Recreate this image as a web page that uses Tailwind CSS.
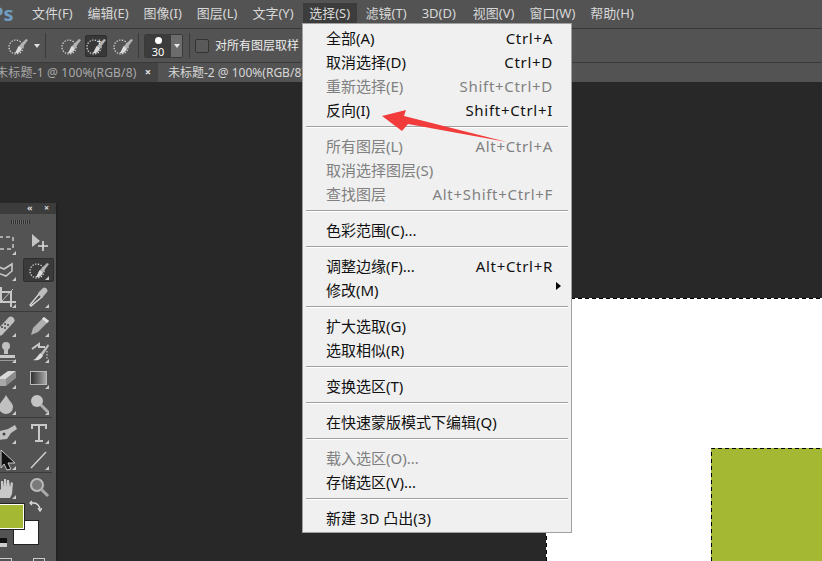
<!DOCTYPE html>
<html><head><meta charset="utf-8"><script src="https://cdn.jsdelivr.net/npm/@tailwindcss/browser@4"></script></head>
<body class="m-0">
<svg class="absolute w-0 h-0">
  <defs>
    <symbol id="qs" viewBox="0 0 20 20">
      <circle cx="8" cy="11" r="7" fill="none" stroke="#e0e0e0" stroke-width="1.2" stroke-dasharray="1.4 1.4"/>
      <path d="M11 10 L18 3 L20 4 L14 12 Z" fill="#b4b4b4"/>
      <path d="M6 17 C9 16 9 11 11 10 L14 12 C13 16 10 18 6 17Z" fill="#dcdcdc"/>
    </symbol>
  </defs>
</svg>
<div class="relative w-[822px] h-[561px] overflow-hidden bg-[#282828] flex flex-col font-['Noto_Sans','Noto_Sans_CJK_SC',sans-serif]">
  <!-- menu bar -->
  <div class="h-[29px] bg-[#535353] border-b border-[#363636] flex items-center text-[13px] text-[#d8d8d8] shrink-0 relative overflow-hidden">
    <span class="absolute -left-[9px] top-[2px] text-[20px] font-bold text-[#6f9fc6] leading-[24px]">Ps</span>
    <div class="ml-[32px] flex gap-[15px] whitespace-nowrap">
      <span>文件(F)</span><span>编辑(E)</span><span>图像(I)</span><span>图层(L)</span><span>文字(Y)</span>
      <span class="w-[54px] -mx-[6px] h-[20px] bg-[#3c3c3c] text-center leading-[20px] mt-[-1px]">选择(S)</span>
      <span>滤镜(T)</span><span class="mr-[2px]">3D(D)</span><span>视图(V)</span><span>窗口(W)</span><span>帮助(H)</span>
    </div>
  </div>
  <!-- options bar -->
  <div class="h-[34px] bg-[#535353] border-b border-[#3a3a3a] flex items-center shrink-0 text-[12px] text-[#ececec]">
    <svg class="ml-[8px] w-[20px] h-[20px]"><use href="#qs"/></svg>
    <span class="ml-[6px] w-0 h-0 border-x-[3px] border-x-transparent border-t-[4px] border-t-[#e0e0e0]"></span>
    <span class="ml-[5px] w-px h-[25px] bg-[#3a3a3a]"></span>
    <svg class="ml-[15px] w-[20px] h-[20px]"><use href="#qs"/></svg>
    <div class="ml-[4px] w-[22px] h-[22px] bg-[#383838] border border-[#2e2e2e] rounded-[2px] relative flex items-center justify-center">
      <svg class="w-[20px] h-[20px]"><use href="#qs"/></svg>
      <span class="absolute right-[4px] top-[1px] text-[9px] leading-[9px] text-white">+</span>
    </div>
    <svg class="ml-[6px] w-[20px] h-[20px]"><use href="#qs"/></svg>
    <span class="ml-[5px] w-px h-[25px] bg-[#3a3a3a]"></span>
    <div class="ml-[5px] w-[39px] h-[24px] flex border border-[#3a3a3a] rounded-[2px] overflow-hidden">
      <div class="flex-1 bg-[#3c3c3c] relative text-center text-[11px] leading-[11px] text-white pt-[11px]">
        <span class="absolute left-[10px] top-[2px] w-[7px] h-[7px] rounded-full bg-white"></span>30
      </div>
      <div class="w-[11px] bg-[#6c6c6c] flex items-center justify-center">
        <span class="w-0 h-0 border-x-[3px] border-x-transparent border-t-[4px] border-t-[#e8e8e8]"></span>
      </div>
    </div>
    <span class="ml-[6px] w-px h-[25px] bg-[#3a3a3a]"></span>
    <span class="ml-[5px] w-[14px] h-[14px] bg-[#5a5a5a] border border-[#333] rounded-[2px]"></span>
    <span class="ml-[6px] whitespace-nowrap">对所有图层取样</span>
  </div>
  <!-- tabs -->
  <div class="h-[19px] bg-[#3b3b3b] flex text-[12px] shrink-0 leading-[19px]">
    <div class="w-[158px] bg-[#444444] text-[#a8a8a8] relative overflow-hidden whitespace-nowrap">
      <span class="absolute -left-[4px] top-0 tracking-[0.2px]">未标题-1 @ 100%(RGB/8)</span>
      <span class="absolute right-[7px] top-[-1px] text-[11px] font-bold text-[#e0e0e0]">×</span>
    </div>
    <div class="flex-1 bg-[#535353] text-[#d8d8d8] pl-[10px] whitespace-nowrap">未标题-2 @ 100%(RGB/8)</div>
  </div>
  <div class="flex-1"></div>

  <!-- document -->
  <div class="absolute left-[546px] top-[298px] w-[276px] h-[263px] bg-white">
    <div class="absolute left-[165px] top-[150px] w-[111px] h-[113px] bg-[#a5b834]"></div>
    <svg class="absolute inset-0 w-[276px] h-[263px]" fill="none" stroke="#000" stroke-dasharray="4 3">
      <path d="M0.5 263V0.5H276"/>
      <path d="M165.5 263V150.5H276"/>
    </svg>
  </div>

  <!-- tools panel -->
  <div class="absolute left-0 top-[203px] w-[58px] h-[358px] bg-[#535353] border-r-2 border-[#222] text-[#ccc]">
    <div class="h-[11px] bg-[#3c3c3c] relative text-[9px] leading-[10px] text-[#ddd]">
      <span class="absolute left-[27px] top-0 font-bold">«</span>
      <span class="absolute left-[44px] top-0 font-bold">×</span>
    </div>
    <div class="h-[15.5px] flex justify-center items-start pt-[6px] pr-[16px]">
      <div class="w-[19px] h-[4px] bg-[repeating-linear-gradient(90deg,#2e2e2e_0,#2e2e2e_1px,#6a6a6a_1px,#6a6a6a_2px)]"></div>
    </div>
    <div class="-ml-[11px] grid grid-cols-[33px_33px] grid-rows-[27px_27px_27px_2px_26px_26px_26px_26px_3px_26px_26px_3px_26px]">
      <!-- marquee -->
      <div class="relative flex items-center justify-center"><svg width="24" height="24" fill="none" stroke="#c8c8c8" stroke-width="1.5" stroke-dasharray="4 3"><rect x="5" y="6" width="14" height="12"/></svg><span class="absolute right-[6px] bottom-[2px] w-0 h-0 border-l-[4px] border-l-transparent border-b-[4px] border-b-[#ccc]"></span></div>
      <!-- move -->
      <div class="relative flex items-center justify-center"><svg width="24" height="24"><path d="M5 3V16L13 10Z" fill="#c4c4c4"/><path d="M16 10V20M11 15H21" stroke="#ddd" stroke-width="1.6"/></svg></div>
      <!-- lasso -->
      <div class="relative flex items-center justify-center"><svg width="24" height="24" fill="none" stroke="#c8c8c8" stroke-width="1.6"><path d="M3 8L10 11L18 6V13L12 18L4 15L2 18"/></svg><span class="absolute right-[6px] bottom-[3px] w-0 h-0 border-l-[4px] border-l-transparent border-b-[4px] border-b-[#ccc]"></span></div>
      <!-- quick select active -->
      <div class="relative flex items-center justify-center"><div class="w-[31px] h-[24px] bg-[#3a3a3a] border border-[#2e2e2e] rounded-[2px] flex items-center justify-center"><svg class="w-[20px] h-[20px]"><use href="#qs"/></svg></div><span class="absolute right-[6px] bottom-[4px] w-0 h-0 border-l-[4px] border-l-transparent border-b-[4px] border-b-[#ccc]"></span></div>
      <!-- crop -->
      <div class="relative flex items-center justify-center"><svg width="24" height="24" fill="none" stroke="#c8c8c8" stroke-width="2"><path d="M7 2V17H22M2 7H17V22"/><path d="M7 17L19 4" stroke-width="1"/></svg><span class="absolute right-[6px] bottom-[3px] w-0 h-0 border-l-[4px] border-l-transparent border-b-[4px] border-b-[#ccc]"></span></div>
      <!-- eyedropper -->
      <div class="relative flex items-center justify-center"><svg width="24" height="24" fill="none"><path d="M4 21L3 20L12 9L15 12Z" stroke="#ddd" stroke-width="1.3"/><path d="M11 8L16 3C18 1 22 5 20 7L15 13Z" fill="#bdbdbd"/></svg><span class="absolute right-[6px] bottom-[3px] w-0 h-0 border-l-[4px] border-l-transparent border-b-[4px] border-b-[#ccc]"></span></div>
      <div class="col-span-2 pl-[11px]"><div class="w-[52px] h-px bg-[#3a3a3a]"></div></div>
      <!-- healing -->
      <div class="relative flex items-center justify-center"><svg width="24" height="24"><path d="M3 16L15 3C18 1 22 5 20 8L8 21C5 23 1 19 3 16Z" fill="#c0c0c0"/><path d="M8 13h.01M11 10h.01M11 14h.01M14 11h.01" stroke="#444" stroke-width="2" stroke-linecap="round"/></svg><span class="absolute right-[6px] bottom-[2px] w-0 h-0 border-l-[4px] border-l-transparent border-b-[4px] border-b-[#ccc]"></span></div>
      <!-- brush -->
      <div class="relative flex items-center justify-center"><svg width="24" height="24"><path d="M4 21L6 14L17 3L22 7L11 18Z" fill="#b0b0b0"/><path d="M17 3L22 7L20 9L15 5Z" fill="#e0e0e0"/></svg><span class="absolute right-[6px] bottom-[2px] w-0 h-0 border-l-[4px] border-l-transparent border-b-[4px] border-b-[#ccc]"></span></div>
      <!-- stamp -->
      <div class="relative flex items-center justify-center"><svg width="24" height="24"><circle cx="12" cy="6" r="4" fill="#c0c0c0"/><path d="M10 8H14V14H10Z" fill="#c0c0c0"/><path d="M3 15H21V18H3Z" fill="#c8c8c8"/><path d="M3 20H21V21H3Z" fill="#999"/></svg><span class="absolute right-[6px] bottom-[2px] w-0 h-0 border-l-[4px] border-l-transparent border-b-[4px] border-b-[#ccc]"></span></div>
      <!-- history brush -->
      <div class="relative flex items-center justify-center"><svg width="24" height="24" fill="none"><path d="M5 9L12 4L12 7L18 7" stroke="#c8c8c8" stroke-width="2"/><path d="M14 13L21 4L22 6L16 15Z" fill="#c0c0c0"/><path d="M6 20C10 19 11 14 14 13L16 15C15 19 11 21 6 20Z" fill="#ddd"/><path d="M20 11V19" stroke="#ddd" stroke-dasharray="1.5 1.5"/></svg><span class="absolute right-[6px] bottom-[2px] w-0 h-0 border-l-[4px] border-l-transparent border-b-[4px] border-b-[#ccc]"></span></div>
      <!-- eraser -->
      <div class="relative flex items-center justify-center"><svg width="24" height="24"><path d="M3 13L14 5H22L12 13Z" fill="#d8d8d8"/><path d="M3 13H12V20H3Z" fill="#a8a8a8"/><path d="M12 13L22 5V12L12 20Z" fill="#8c8c8c"/></svg><span class="absolute right-[6px] bottom-[2px] w-0 h-0 border-l-[4px] border-l-transparent border-b-[4px] border-b-[#ccc]"></span></div>
      <!-- gradient -->
      <div class="relative flex items-center justify-center"><div class="w-[17px] h-[14px] border border-[#bbb] bg-gradient-to-r from-[#333] to-[#aaa]"></div><span class="absolute right-[6px] bottom-[2px] w-0 h-0 border-l-[4px] border-l-transparent border-b-[4px] border-b-[#ccc]"></span></div>
      <!-- blur -->
      <div class="relative flex items-center justify-center"><svg width="24" height="24"><path d="M12 3C9 9 5 11 5 15A7 7 0 0 0 19 15C19 11 15 9 12 3Z" fill="#c0c0c0"/></svg><span class="absolute right-[6px] bottom-[2px] w-0 h-0 border-l-[4px] border-l-transparent border-b-[4px] border-b-[#ccc]"></span></div>
      <!-- dodge -->
      <div class="relative flex items-center justify-center"><svg width="24" height="24" fill="none"><circle cx="10" cy="9" r="6" fill="#c4c4c4"/><path d="M14 13L21 20" stroke="#b0b0b0" stroke-width="3"/></svg><span class="absolute right-[6px] bottom-[2px] w-0 h-0 border-l-[4px] border-l-transparent border-b-[4px] border-b-[#ccc]"></span></div>
      <div class="col-span-2 pl-[11px]"><div class="w-[52px] h-px bg-[#3a3a3a]"></div></div>
      <!-- pen -->
      <div class="relative flex items-center justify-center"><svg width="24" height="24"><path d="M3 19L6 10L14 8L21 4L23 8L17 12L13 18Z" fill="#c0c0c0"/><circle cx="10" cy="13" r="1.5" fill="#444"/></svg><span class="absolute right-[6px] bottom-[2px] w-0 h-0 border-l-[4px] border-l-transparent border-b-[4px] border-b-[#ccc]"></span></div>
      <!-- type -->
      <div class="relative flex items-center justify-center"><svg width="24" height="24" fill="none" stroke="#c8c8c8" stroke-width="2"><path d="M5 8V4H19V8M12 4V20M8 20H16"/></svg><span class="absolute right-[6px] bottom-[2px] w-0 h-0 border-l-[4px] border-l-transparent border-b-[4px] border-b-[#ccc]"></span></div>
      <!-- direct select -->
      <div class="relative flex items-center justify-center"><svg width="24" height="24"><path d="M7 3L21 16L14 16L17 22L13 23L10 17L7 21Z" fill="#111" stroke="#ccc"/></svg><span class="absolute right-[6px] bottom-[2px] w-0 h-0 border-l-[4px] border-l-transparent border-b-[4px] border-b-[#ccc]"></span></div>
      <!-- line -->
      <div class="relative flex items-center justify-center"><svg width="24" height="24"><path d="M4 21L19 5" stroke="#d0d0d0" stroke-width="1.4"/></svg><span class="absolute right-[6px] bottom-[2px] w-0 h-0 border-l-[4px] border-l-transparent border-b-[4px] border-b-[#ccc]"></span></div>
      <div class="col-span-2 pl-[11px]"><div class="w-[52px] h-px bg-[#3a3a3a]"></div></div>
      <!-- hand -->
      <div class="relative flex items-center justify-center"><svg width="24" height="24"><path d="M6 22L2 12L4 11L7 14V5L9 5L10 11V3L12 3L13 11V4L15 4L16 11L17 6L19 7L18 18L16 22Z" fill="#c8c8c8"/></svg><span class="absolute right-[6px] bottom-[2px] w-0 h-0 border-l-[4px] border-l-transparent border-b-[4px] border-b-[#ccc]"></span></div>
      <!-- zoom -->
      <div class="relative flex items-center justify-center"><svg width="24" height="24" fill="none"><circle cx="10" cy="9" r="6" fill="#7a7a7a" stroke="#bbb" stroke-width="2"/><path d="M14 13L21 20" stroke="#aaa" stroke-width="3"/></svg></div>
    </div>
    <!-- colour chips -->
    <div class="absolute left-[13px] top-[317px] w-[26px] h-[25px] bg-white border border-[#222]"></div>
    <div class="absolute -left-[2px] top-[301px] w-[26px] h-[25px] bg-[#a5b834] border border-white outline outline-[#222]"></div>
    <svg class="absolute left-[29px] top-[297px]" width="13" height="13" fill="none" stroke="#ddd" stroke-width="1.3"><path d="M1 3H5C8 3 11 6 11 10"/><path d="M3 1L1 3L3 5M9 8L11 11L13 8"/></svg>
    <div class="absolute left-0 top-[335px] w-[7px] h-[5px] bg-[#111]"></div>
    <div class="absolute left-0 top-[340px] w-[7px] h-[4px] bg-[#ccc]"></div>
    <div class="absolute left-0 top-[355px] w-[12px] h-[3px] border-t border-r border-[#ccc]"></div>
    <div class="absolute left-[33px] top-[355px] w-[12px] h-[3px] border-t border-x border-[#ccc]"></div>
  </div>

  <!-- menu -->
  <div class="absolute left-[302px] top-[23px] w-[270px] h-[510px] bg-[#f0f0f0] border border-[#a0a0a0] pt-[2px] text-[15px] text-[#111] leading-[24px] whitespace-nowrap">
    <div class="flex justify-between pl-[23px] pr-[18px]"><span>全部(A)</span><span class="tracking-[0.7px]">Ctrl+A</span></div>
    <div class="flex justify-between pl-[23px] pr-[18px]"><span>取消选择(D)</span><span class="tracking-[0.7px]">Ctrl+D</span></div>
    <div class="flex justify-between pl-[23px] pr-[18px] text-[#808080]"><span>重新选择(E)</span><span class="tracking-[0.7px]">Shift+Ctrl+D</span></div>
    <div class="flex justify-between pl-[23px] pr-[18px]"><span>反向(I)</span><span class="tracking-[0.7px]">Shift+Ctrl+I</span></div>
    <div class="h-[12px] pt-[4px] px-[3px]"><div class="h-[2px] bg-[#a0a0a0] border-b border-white"></div></div>
    <div class="flex justify-between pl-[23px] pr-[18px] text-[#808080]"><span>所有图层(L)</span><span class="tracking-[0.7px]">Alt+Ctrl+A</span></div>
    <div class="flex justify-between pl-[23px] pr-[18px] text-[#808080]"><span>取消选择图层(S)</span></div>
    <div class="flex justify-between pl-[23px] pr-[18px] text-[#808080]"><span>查找图层</span><span class="tracking-[0.7px]">Alt+Shift+Ctrl+F</span></div>
    <div class="h-[12px] pt-[4px] px-[3px]"><div class="h-[2px] bg-[#a0a0a0] border-b border-white"></div></div>
    <div class="pl-[23px]">色彩范围(C)...</div>
    <div class="h-[12px] pt-[4px] px-[3px]"><div class="h-[2px] bg-[#a0a0a0] border-b border-white"></div></div>
    <div class="flex justify-between pl-[23px] pr-[18px]"><span>调整边缘(F)...</span><span class="tracking-[0.7px]">Alt+Ctrl+R</span></div>
    <div class="relative pl-[23px]">修改(M)<span class="absolute right-[10px] top-[4px] w-0 h-0 border-y-[4.5px] border-y-transparent border-l-[5px] border-l-black"></span></div>
    <div class="h-[12px] pt-[4px] px-[3px]"><div class="h-[2px] bg-[#a0a0a0] border-b border-white"></div></div>
    <div class="pl-[23px]">扩大选取(G)</div>
    <div class="pl-[23px]">选取相似(R)</div>
    <div class="h-[12px] pt-[4px] px-[3px]"><div class="h-[2px] bg-[#a0a0a0] border-b border-white"></div></div>
    <div class="pl-[23px]">变换选区(T)</div>
    <div class="h-[12px] pt-[4px] px-[3px]"><div class="h-[2px] bg-[#a0a0a0] border-b border-white"></div></div>
    <div class="pl-[23px]">在快速蒙版模式下编辑(Q)</div>
    <div class="h-[12px] pt-[4px] px-[3px]"><div class="h-[2px] bg-[#a0a0a0] border-b border-white"></div></div>
    <div class="pl-[23px] text-[#808080]">载入选区(O)...</div>
    <div class="pl-[23px]">存储选区(V)...</div>
    <div class="h-[12px] pt-[4px] px-[3px]"><div class="h-[2px] bg-[#a0a0a0] border-b border-white"></div></div>
    <div class="pl-[23px]">新建 3D 凸出(3)</div>
  </div>

  <!-- red annotation arrow -->
  <svg class="absolute inset-0 w-[822px] h-[561px] pointer-events-none"><polygon points="382,116 406,110 404,116 507,142 408,124 402,131" fill="#f23c3c"/></svg>
</div>
</body></html>
